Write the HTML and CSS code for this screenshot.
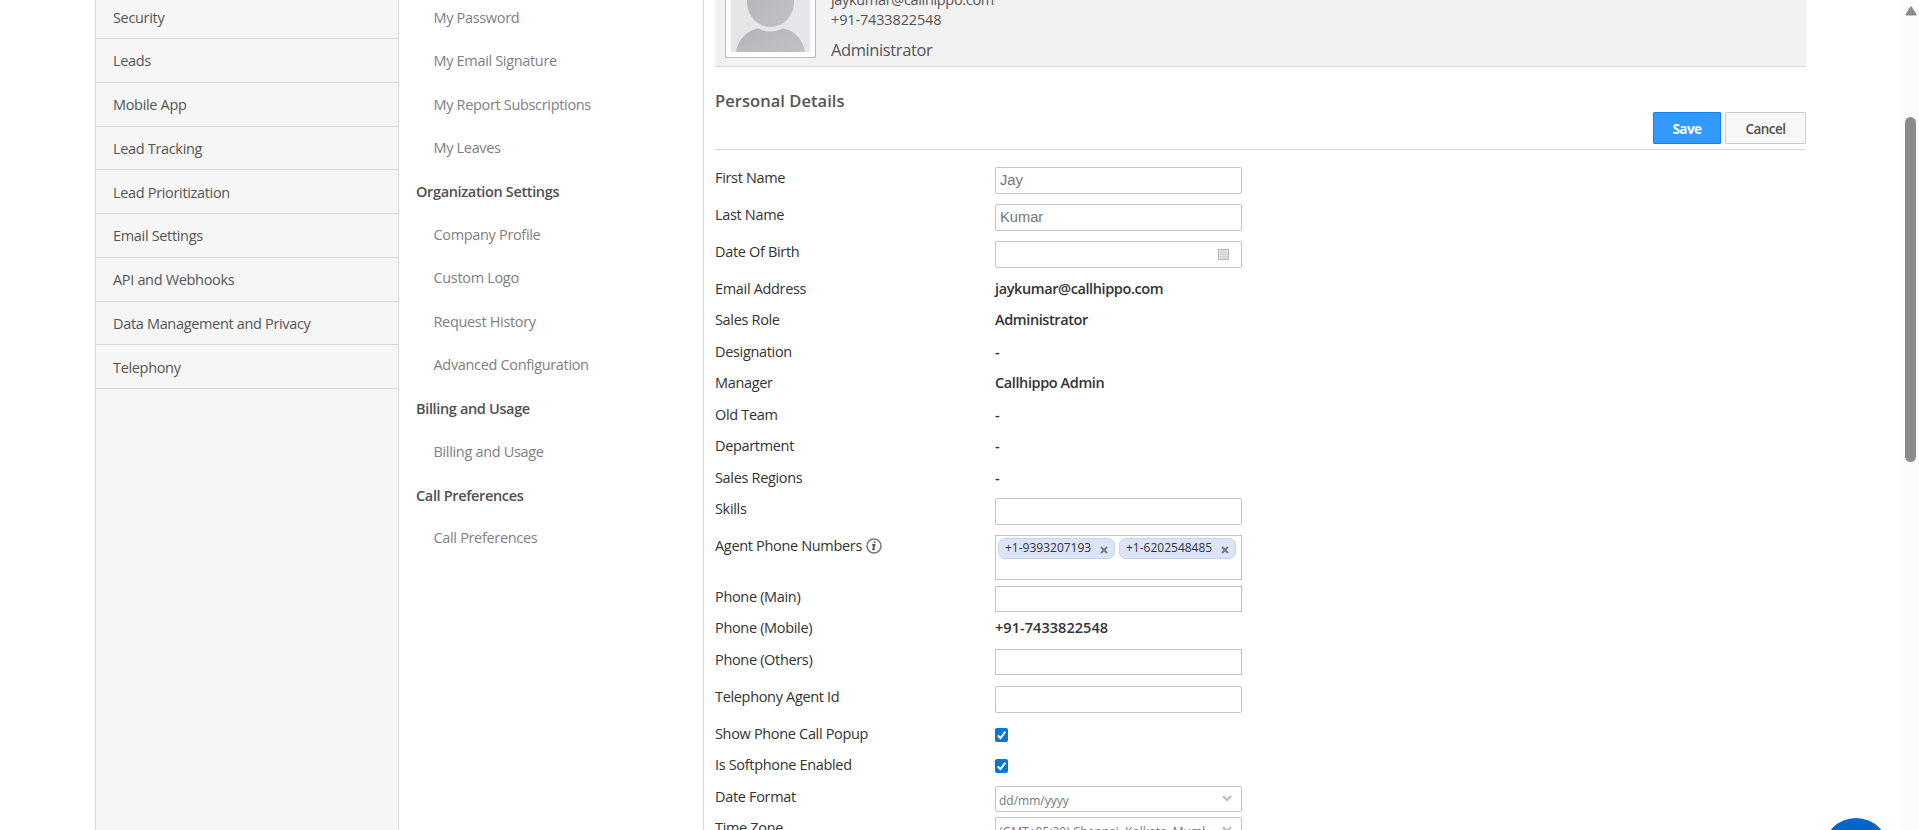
FILE: index.html
```html
<!DOCTYPE html>
<html lang="en">
<head>
	<meta charset="UTF-8">
	<title>My Profile</title>
	<link rel="stylesheet" href="styles.css">
</head>
<body>
	<div class="page">
		<div class="sidebar">
			<ul>
				<li><a>Security</a></li>
				<li><a>Leads</a></li>
				<li><a>Mobile App</a></li>
				<li><a>Lead Tracking</a></li>
				<li><a>Lead Prioritization</a></li>
				<li><a>Email Settings</a></li>
				<li><a>API and Webhooks</a></li>
				<li><a>Data Management and Privacy</a></li>
				<li><a>Telephony</a></li>
			</ul>
		</div>
		<div class="submenu">
			<ul>
				<li>My Password</li>
				<li>My Email Signature</li>
				<li>My Report Subscriptions</li>
				<li>My Leaves</li>
				<li class="head">Organization Settings</li>
				<li>Company Profile</li>
				<li>Custom Logo</li>
				<li>Request History</li>
				<li>Advanced Configuration</li>
				<li class="head">Billing and Usage</li>
				<li>Billing and Usage</li>
				<li class="head">Call Preferences</li>
				<li>Call Preferences</li>
			</ul>
		</div>
		<div class="content">
			<div class="profile">
				<div class="avatar">
					<svg width="79" height="79" viewBox="0 0 79 79">
						<defs>
							<linearGradient id="person" x1="0" y1="0" x2="1" y2="1">
								<stop offset="0" stop-color="#b2b4b6"/>
								<stop offset="1" stop-color="#c0c2c5"/>
							</linearGradient>
						</defs>
						<rect width="79" height="79" fill="#e4e6e8"/>
						<path d="M5 79C7 66 17 56 30 55H49C62 56 72 66 74 79Z" fill="url(#person)"/>
						<ellipse cx="39.5" cy="31" rx="26" ry="27.5" fill="#e4e6e8"/>
						<ellipse cx="39.5" cy="29" rx="23.5" ry="25" fill="url(#person)"/>
					</svg>
				</div>
				<div class="who">
					<div class="mail">jaykumar@callhippo.com</div>
					<div class="phone">+91-7433822548</div>
					<div class="role">Administrator</div>
				</div>
			</div>
			<div class="title">
				<h2>Personal Details</h2>
				<div class="btns">
					<button class="btn save">Save</button>
					<button class="btn cancel">Cancel</button>
				</div>
			</div>
			<div class="form">
				<div class="row tall"><label>First Name</label><input class="box" type="text" value="Jay"></div>
				<div class="row tall"><label>Last Name</label><input class="box" type="text" value="Kumar"></div>
				<div class="row tall"><label>Date Of Birth</label>
					<div class="box date">
						<svg width="11" height="11" viewBox="0 0 11 11">
							<rect x=".5" y=".5" width="10" height="10" fill="#e6e6e6" stroke="#b5b5b5"/>
							<path d="M3.5 1v9M5.5 1v9M7.5 1v9M1 3.5h9M1 5.5h9M1 7.5h9" stroke="#cdcdcd" stroke-width=".6"/>
						</svg>
					</div>
				</div>
				<div class="row"><label>Email Address</label><b>jaykumar@callhippo.com</b></div>
				<div class="row"><label>Sales Role</label><b>Administrator</b></div>
				<div class="row"><label>Designation</label><b>-</b></div>
				<div class="row"><label>Manager</label><b>Callhippo Admin</b></div>
				<div class="row"><label>Old Team</label><b>-</b></div>
				<div class="row"><label>Department</label><b>-</b></div>
				<div class="row"><label>Sales Regions</label><b>-</b></div>
				<div class="row tall"><label>Skills</label><input class="box" type="text"></div>
				<div class="row agents">
					<label>Agent Phone Numbers
						<svg class="info" width="16" height="16" viewBox="0 0 16 16">
							<circle cx="8" cy="8" r="7" fill="#fff" stroke="#777" stroke-width="1.5"/>
							<path d="M6.2 6.8h2.2l-1.2 4.6h1.6M8.8 3.4l-.3 1.6" fill="none" stroke="#555" stroke-width="1.8"/>
						</svg>
					</label>
					<div class="tags">
						<span class="tag">+1-9393207193<svg width="8" height="8" viewBox="0 0 8 8"><path d="M1 1l6 6M7 1L1 7"/></svg></span>
						<span class="tag">+1-6202548485<svg width="8" height="8" viewBox="0 0 8 8"><path d="M1 1l6 6M7 1L1 7"/></svg></span>
					</div>
				</div>
				<div class="row"><label>Phone (Main)</label><input class="box square" type="text"></div>
				<div class="row"><label>Phone (Mobile)</label><b class="num">+91-7433822548</b></div>
				<div class="row tall"><label>Phone (Others)</label><input class="box square" type="text"></div>
				<div class="row tall"><label>Telephony Agent Id</label><input class="box" type="text"></div>
				<div class="row"><label>Show Phone Call Popup</label>
					<span class="check"><svg width="13" height="14" viewBox="0 0 13 14"><path d="M2.8 7.4l2.6 2.7 5-6.5"/></svg></span>
				</div>
				<div class="row"><label>Is Softphone Enabled</label>
					<span class="check"><svg width="13" height="14" viewBox="0 0 13 14"><path d="M2.8 7.4l2.6 2.7 5-6.5"/></svg></span>
				</div>
				<div class="row"><label>Date Format</label>
					<div class="box select"><span>dd/mm/yyyy</span><svg width="10" height="7" viewBox="0 0 10 7"><path d="M1 1l4 4 4-4"/></svg></div>
				</div>
				<div class="row"><label>Time Zone</label>
					<div class="box select"><span>(GMT+05:30) Chennai, Kolkata, Mumbai</span><svg width="10" height="7" viewBox="0 0 10 7"><path d="M1 1l4 4 4-4"/></svg></div>
				</div>
			</div>
		</div>
	</div>
	<div class="chat"></div>
	<div class="scrollbar">
		<svg width="12" height="10" viewBox="0 0 12 10"><path d="M6 1.2L10.8 8.6H1.2Z" fill="#8b8b8b" stroke="#8b8b8b" stroke-width="1.6" stroke-linejoin="round"/></svg>
		<div class="thumb"></div>
	</div>
</body>
</html>
```

FILE: styles.css
```css
*{
	box-sizing:border-box;
}
body{
	margin:0;
	height:830px;
	overflow:hidden;
	background:#fff;
	font-family:"Open Sans","Noto Sans",sans-serif;
	font-size:14.5px;
	letter-spacing:-0.33px;
	line-height:20px;
	color:#333;
}
ul{
	margin:0;
	padding:0;
	list-style:none;
}
.page{
	display:flex;
	height:830px;
	padding-left:95px;
	overflow:hidden;
}
/* left menus */
.sidebar{
	width:304px;
	border-left:1px solid #d9d9d9;
	border-right:1px solid #d9d9d9;
	background:#f6f6f6;
	overflow:hidden;
}
.sidebar ul{
	margin-top:-4.75px;
}
.sidebar li{
	height:43.75px;
	padding:12.3px 0 0 17px;
	border-bottom:1px solid #d9d9d9;
	color:#555;
}
.submenu{
	width:305px;
	border-right:1px solid #d9d9d9;
	overflow:hidden;
}
.submenu ul{
	margin-top:-4px;
}
.submenu li{
	height:43.35px;
	padding:12.1px 0 0 34.5px;
	color:#808080;
}
.submenu .head{
	padding:12.8px 0 0 17px;
	font-weight:600;
	letter-spacing:-0.35px;
	color:#505050;
}
/* profile header */
.content{
	width:1091px;
	margin-left:11px;
}
.profile{
	display:flex;
	height:67px;
	padding-left:10px;
	background:#f2f2f2;
	border-bottom:1px solid #d9d9d9;
}
.avatar{
	width:91px;
	height:91px;
	margin-top:-33px;
	padding:5px;
	border:1px solid #bbb;
	background:#fff;
}
.avatar svg{
	display:block;
}
.who{
	margin:-10px 0 0 15px;
	color:#555;
}
.phone{
	letter-spacing:-0.15px;
}
.role{
	margin-top:10px;
	font-size:16.5px;
	letter-spacing:-0.4px;
}
.title{
	display:flex;
	justify-content:space-between;
	height:83px;
	border-bottom:1px solid #d9d9d9;
}
.title h2{
	margin:24px 0 0;
	font-size:16.5px;
	font-weight:600;
	letter-spacing:0.05px;
	color:#555;
}
.btns{
	display:flex;
	gap:4px;
	margin-top:45px;
}
.btn{
	height:32px;
	padding:2px 0 0;
	border:1px solid #ccc;
	border-radius:1px;
	background:#f8f8f8;
	font:600 13.5px "Open Sans",sans-serif;
	letter-spacing:-0.55px;
	color:#505050;
}
.save{
	width:68px;
	border-color:#0a84f0;
	background:#3399ff;
	font-weight:700;
	color:#fff;
}
.cancel{
	width:81px;
}
/* form */
.form{
	padding-top:17px;
}
.row{
	display:flex;
	align-items:flex-start;
	height:31.43px;
}
.tall{
	height:37px;
}
.agents{
	height:51px;
}
.row label{
	display:flex;
	align-items:center;
	width:280px;
	padding-top:1px;
}
.row b{
	padding-top:1px;
	font-weight:600;
	letter-spacing:-0.4px;
}
.row .num{
	letter-spacing:0.05px;
}
.box{
	width:247px;
	height:27px;
	margin:0;
	padding:0 5px 2px 4px;
	border:1px solid #c4c4c4;
	border-radius:2px;
	background:#fff;
	font:14.67px "Liberation Sans",Arial,sans-serif;
	color:#777;
}
.square{
	height:26px;
	border-radius:0;
}
.date{
	display:flex;
	align-items:center;
	justify-content:flex-end;
	padding:0 12px 0 0;
}
.info{
	margin-left:4px;
}
.tags{
	display:flex;
	align-items:flex-start;
	gap:4px;
	width:247px;
	height:45px;
	padding:2px;
	border:1px solid #c4c4c4;
}
.tag{
	display:flex;
	align-items:center;
	justify-content:space-between;
	width:117px;
	height:21px;
	padding:0 6px 0 6px;
	border:1px solid #c5d3f0;
	border-radius:7px;
	background:#dce5f7;
	font-size:12px;
	letter-spacing:0;
}
.tag svg{
	margin-top:4px;
	fill:none;
	stroke:#777;
	stroke-width:1.8;
}
.check{
	width:13px;
	height:14px;
	margin-top:5px;
	border-radius:2px;
	background:#0078d7;
}
.check svg{
	display:block;
	fill:none;
	stroke:#fff;
	stroke-width:2;
}
.select{
	display:flex;
	justify-content:space-between;
	height:26px;
	padding:4px 9px 0 3px;
	font:12px/20px "Open Sans",sans-serif;
	letter-spacing:0;
}
.select span{
	width:206px;
	overflow:hidden;
	white-space:nowrap;
}
.select svg{
	margin-top:4px;
	fill:none;
	stroke:#c0c0c0;
	stroke-width:2.4;
}
/* floating over the page */
.chat{
	position:absolute;
	top:818px;
	left:1823px;
	width:66px;
	height:66px;
	border-radius:50%;
	background:#0066cc;
}
.scrollbar{
	position:absolute;
	top:0;
	right:0;
	width:18px;
	height:830px;
	padding:6px 0 0 4px;
	background:#fcfcfc;
}
.scrollbar svg{
	display:block;
}
.thumb{
	width:11px;
	height:345px;
	margin:101px 0 0 0;
	border-radius:6px;
	background:#8b8b8b;
}
```
